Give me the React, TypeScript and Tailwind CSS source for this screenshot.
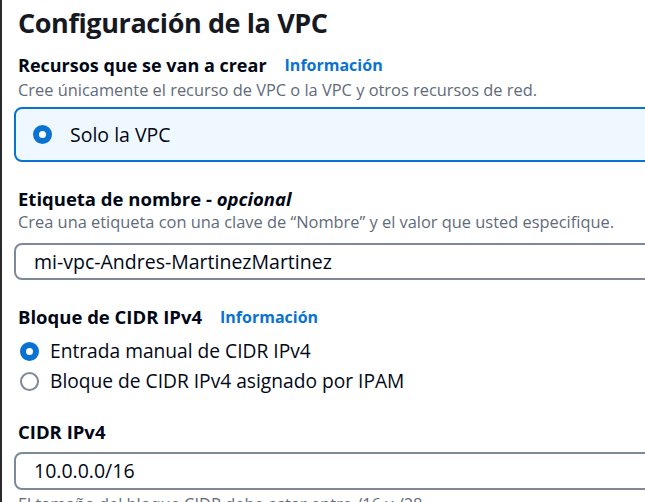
import React from "react";

function Radio({ checked }: { checked: boolean }) {
  return checked ? (
    <span className="inline-block w-[19px] h-[19px] rounded-full border-[6px] border-[#0972d3] bg-white shrink-0" />
  ) : (
    <span className="inline-block w-[19px] h-[19px] rounded-full border-2 border-[#7d8998] bg-white shrink-0" />
  );
}

export default function App() {
  return (
    <div
      className="w-[645px] h-[502px] overflow-hidden bg-white border-l-2 border-[#2a2a2a] text-[#000716]"
      style={{ fontFamily: '"Open Sans", "Noto Sans", sans-serif' }}
    >
      <div className="pl-[16px] pt-[3px]">
        <h1 className="text-[27px] font-bold leading-[40px] text-[#16191f] tracking-[-0.4px]">
          Configuración de la VPC
        </h1>

        <div className="mt-[10px] flex items-center gap-[18px] h-[24px]">
          <span className="text-[18px] font-bold">Recursos que se van a crear</span>
          <span className="text-[16px] font-bold text-[#0972d3]">Información</span>
        </div>
        <div className="text-[16.4px] text-[#5f6b7a] leading-[22px] mt-[2px]">
          Cree únicamente el recurso de VPC o la VPC y otros recursos de red.
        </div>

        <div className="mt-[6px] -ml-[4px] h-[55px] w-[700px] rounded-[8px] border-2 border-[#0972d3] bg-[#f0f8ff] flex items-center pl-[17px] gap-[18px]">
          <Radio checked />
          <span className="text-[19.5px]">Solo la VPC</span>
        </div>

        <div className="mt-[25px] text-[18.5px] font-bold leading-[24px]">
          Etiqueta de nombre - <i className="italic">opcional</i>
        </div>
        <div className="text-[16.4px] text-[#5f6b7a] leading-[22px]">
          Crea una etiqueta con una clave de “Nombre” y el valor que usted especifique.
        </div>

        <div className="mt-[10px] -ml-[4px] h-[37px] w-[700px] rounded-[8px] border-2 border-[#7d8998] bg-white flex items-center pl-[18px] text-[19.5px]">
          mi-vpc-Andres-MartinezMartinez
        </div>

        <div className="mt-[25px] flex items-center gap-[18px] h-[24px]">
          <span className="text-[18.5px] font-bold">Bloque de CIDR IPv4</span>
          <span className="text-[16px] font-bold text-[#0972d3]">Información</span>
        </div>
        <div className="mt-[11px] flex flex-col gap-[8px]">
          <div className="flex items-center gap-[11px] pl-[2px] h-[22px]">
            <Radio checked />
            <span className="text-[19.2px]">Entrada manual de CIDR IPv4</span>
          </div>
          <div className="flex items-center gap-[11px] pl-[2px] h-[22px]">
            <Radio checked={false} />
            <span className="text-[19.2px]">Bloque de CIDR IPv4 asignado por IPAM</span>
          </div>
        </div>

        <div className="mt-[28px] text-[18.5px] font-bold leading-[24px]">CIDR IPv4</div>
        <div className="mt-[8px] -ml-[4px] h-[38px] w-[700px] rounded-[8px] border-2 border-[#7d8998] bg-white flex items-center pl-[18px] text-[19.5px]">
          10.0.0.0/16
        </div>
        <div className="text-[16.4px] text-[#5f6b7a] leading-[22px] mt-[3px]">
          El tamaño del bloque CIDR debe estar entre /16 y /28.
        </div>
      </div>
    </div>
  );
}
